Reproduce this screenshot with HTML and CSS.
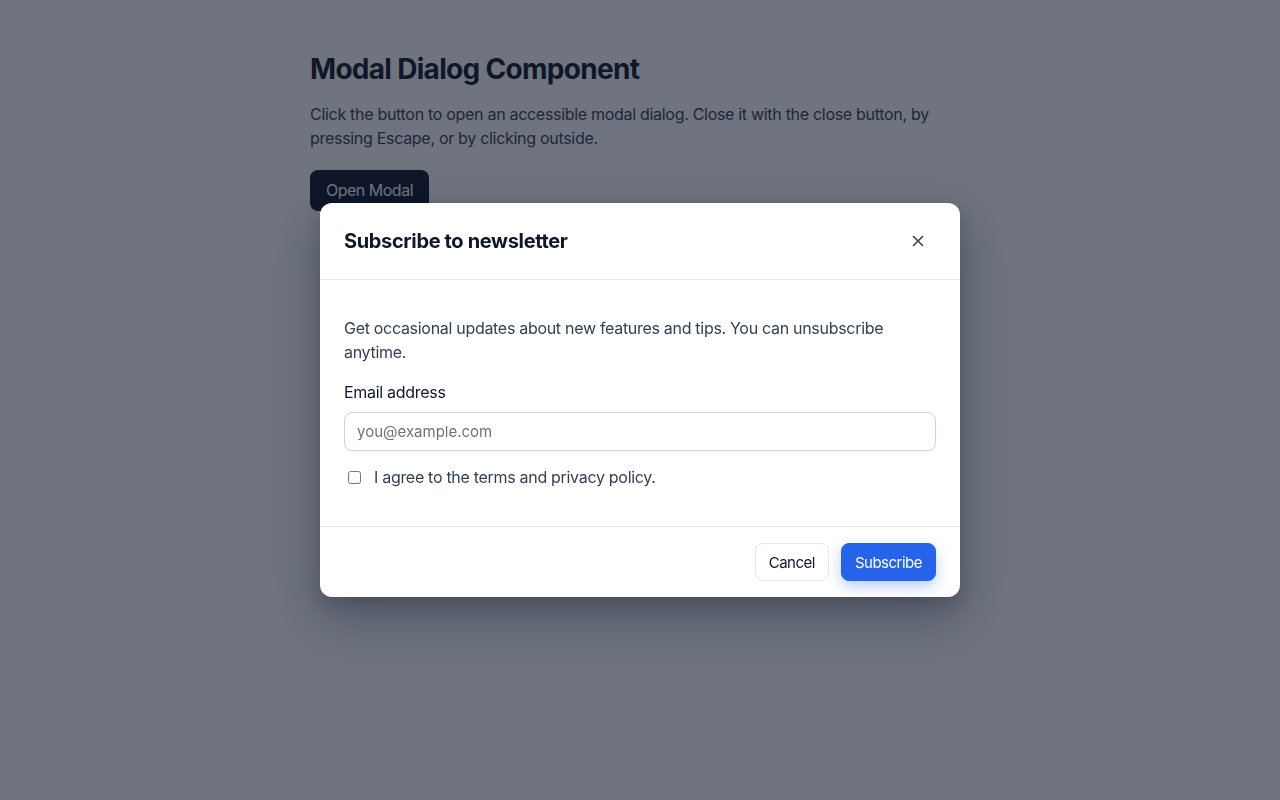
FILE: index.html
```html
<!DOCTYPE html>
<html lang="en">
<head>
<meta charset="utf-8">
<title>Modal Dialog Component</title>
<link rel="stylesheet" href="styles.css">
</head>
<body>
<main class="page">
  <h1 class="page-title">Modal Dialog Component</h1>
  <p class="page-text">Click the button to open an accessible modal dialog. Close it with the close button, by pressing Escape, or by clicking outside.</p>
  <button class="btn-dark" type="button">Open Modal</button>
</main>

<div class="overlay">
  <div class="modal" role="dialog" aria-modal="true" aria-labelledby="modal-title">
    <header class="modal-header">
      <h2 class="modal-title" id="modal-title">Subscribe to newsletter</h2>
      <button class="close-btn" type="button" aria-label="Close">
        <svg width="14" height="14" viewBox="0 0 14 14" fill="none" stroke="#334155" stroke-width="1.6" stroke-linecap="round"><path d="M2.5 2.5l9 9M11.5 2.5l-9 9"/></svg>
      </button>
    </header>
    <div class="modal-body">
      <p class="modal-text">Get occasional updates about new features and tips. You can unsubscribe anytime.</p>
      <label class="field-label" for="email">Email address</label>
      <input class="field-input" id="email" type="email" placeholder="you@example.com">
      <label class="check-row"><input type="checkbox" class="check"> <span>I agree to the terms and privacy policy.</span></label>
    </div>
    <footer class="modal-footer">
      <button class="btn-ghost" type="button">Cancel</button>
      <button class="btn-primary" type="button">Subscribe</button>
    </footer>
  </div>
</div>
</body>
</html>
```

FILE: styles.css
```css
* { box-sizing: border-box; }
html, body { margin: 0; padding: 0; }
body {
  background: #ffffff;
  font-family: Inter, "Noto Sans", "Liberation Sans", sans-serif;
  color: #0f172a;
  height: 800px;
  letter-spacing: -0.3px;
}
.page {
  width: 660px;
  margin: 0 auto;
  padding-top: 52px;
}
.page-title {
  font-size: 28px;
  line-height: 34px;
  font-weight: 700;
  margin: 0 0 16px;
  color: #0f172a;
  letter-spacing: -0.7px;
}
.page-text {
  font-size: 16px;
  line-height: 24px;
  color: #334155;
  margin: 0 0 20px;
}
.btn-dark {
  font: inherit;
  font-size: 16px;
  line-height: 21px;
  padding: 10px 16px;
  border: 0;
  border-radius: 8px;
  background: #0f172a;
  color: #ffffff;
  letter-spacing: -0.5px;
}
.overlay {
  position: fixed;
  inset: 0;
  background: rgba(15, 23, 42, 0.6);
  display: flex;
  align-items: center;
  justify-content: center;
}
.modal {
  width: 640px;
  background: #ffffff;
  border-radius: 12px;
  box-shadow: 0 20px 50px rgba(15, 23, 42, 0.35), 0 8px 16px rgba(15, 23, 42, 0.15);
  overflow: hidden;
}
.modal-header {
  display: flex;
  align-items: center;
  justify-content: space-between;
  padding: 20px 24px;
  border-bottom: 1px solid #e2e8f0;
}
.modal-title {
  margin: 0;
  font-size: 20px;
  line-height: 28px;
  font-weight: 700;
  color: #0f172a;
  letter-spacing: -0.35px;
}
.close-btn {
  width: 36px;
  height: 36px;
  border: 0;
  background: transparent;
  border-radius: 8px;
  display: flex;
  align-items: center;
  justify-content: center;
  padding: 0;
}
.modal-body {
  padding: 36px 24px 37px;
  display: flex;
  flex-direction: column;
}
.modal-text {
  margin: 0 0 16px;
  font-size: 16px;
  line-height: 24px;
  color: #334155;
}
.field-label {
  font-size: 16px;
  line-height: 24px;
  color: #0f172a;
  margin-bottom: 8px;
}
.field-input {
  font: inherit;
  font-size: 15px;
  height: 39px;
  padding: 0 12px;
  border: 1px solid #cbd5e1;
  border-radius: 8px;
  color: #0f172a;
  background: #ffffff;
  outline: none;
}
.field-input::placeholder { color: #6b7280; }
.check-row {
  display: flex;
  align-items: center;
  gap: 13px;
  margin-top: 14px;
  font-size: 16px;
  line-height: 24px;
  color: #334155;
}
.check {
  margin: 0 0 0 4px;
  width: 13px;
  height: 13px;
}
.modal-footer {
  display: flex;
  justify-content: flex-end;
  gap: 12px;
  padding: 16px 24px;
  border-top: 1px solid #e2e8f0;
}
.btn-ghost, .btn-primary {
  font: inherit;
  font-size: 15px;
  height: 38px;
  padding: 0 13px;
  border-radius: 8px;
  letter-spacing: -0.5px;
}
.btn-ghost {
  background: #ffffff;
  border: 1px solid #e2e8f0;
  color: #0f172a;
}
.btn-primary {
  background: #2563eb;
  border: 1px solid #2563eb;
  color: #ffffff;
  font-weight: 400;
  box-shadow: 0 6px 14px rgba(37, 99, 235, 0.3);
}
```
